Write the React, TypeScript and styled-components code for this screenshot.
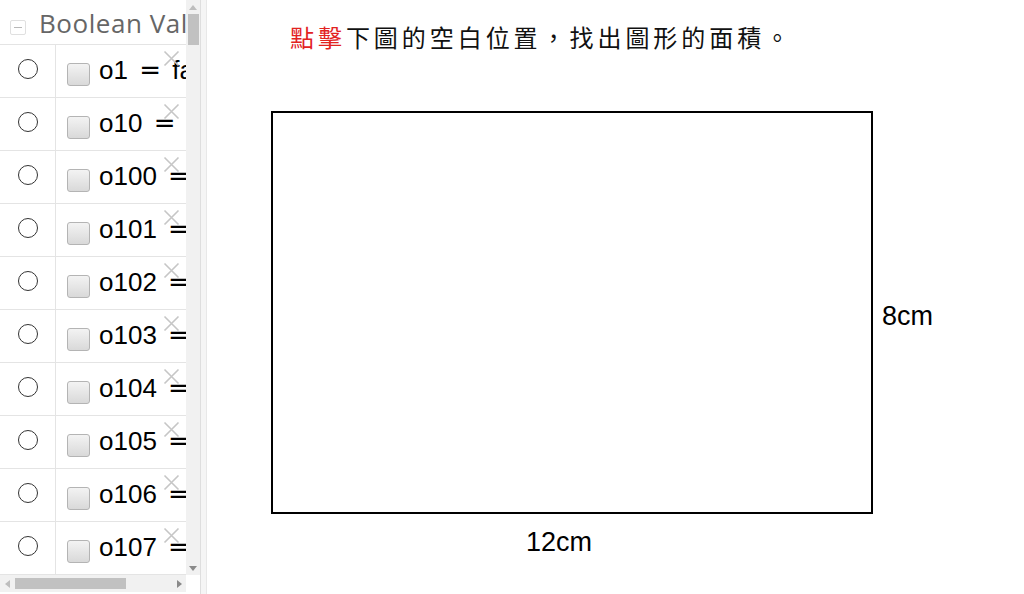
import React from 'react'
import styled, { createGlobalStyle } from 'styled-components'

const GlobalStyle = createGlobalStyle`
  html, body {
    margin: 0;
    padding: 0;
    background: #fff;
  }
  body {
    font-family: 'Liberation Sans', Arial, sans-serif;
    overflow: hidden;
  }
`

const Page = styled.div`
  display: flex;
  width: 1024px;
  height: 594px;
  overflow: hidden;
`

const AlgebraPanel = styled.div`
  display: grid;
  grid-template-columns: 186px 14px;
  grid-template-rows: 575px 17px 2px;
  width: 200px;
  flex-shrink: 0;
`

const ListArea = styled.div`
  overflow: hidden;
`

const Header = styled.div`
  display: flex;
  align-items: flex-start;
  height: 44px;
  padding-left: 10px;
  border-bottom: 1px solid #e4e4e4;
  white-space: nowrap;
`

const CollapseBox = styled.div`
  position: relative;
  flex-shrink: 0;
  width: 14px;
  height: 13px;
  margin-top: 20px;
  border: 1px solid #e0e0e0;
  border-radius: 2px;

  &::after {
    content: '';
    position: absolute;
    left: 3px;
    right: 3px;
    top: 6px;
    height: 1px;
    background: #b8b8b8;
  }
`

const HeaderTitle = styled.div`
  margin: 9px 0 0 13px;
  font-family: 'Open Sans', 'Liberation Sans', sans-serif;
  font-size: 26px;
  line-height: 28px;
  letter-spacing: 0.55px;
  color: #666;
`

const Row = styled.div`
  display: grid;
  grid-template-columns: 56px 1fr;
  height: 52px;
  border-bottom: 1px solid #e4e4e4;
`

const RadioCell = styled.div`
  display: flex;
  justify-content: center;
  align-items: flex-start;
  padding-top: 14px;
  border-right: 1px solid #e4e4e4;
`

const Radio = styled.div`
  width: 18px;
  height: 18px;
  border: 1px solid #333;
  border-radius: 50%;
  background: #fff;
`

const ValueCell = styled.div`
  position: relative;
  display: flex;
  align-items: flex-start;
  padding-left: 11px;
  overflow: hidden;
  white-space: nowrap;
`

const CheckBox = styled.div`
  flex-shrink: 0;
  width: 21px;
  height: 21px;
  margin-top: 18px;
  border: 1px solid #b4b4b4;
  border-radius: 3px;
  background: linear-gradient(#f3f3f3, #d9d9d9);
`

const Expression = styled.div`
  margin: 12px 0 0 9px;
  font-size: 26px;
  line-height: 26px;
  color: #000;
`

const Eq = styled.span`
  margin: 0 4px 0 4px;
  font-family: 'DejaVu Sans', sans-serif;
`

const DeleteButton = styled.svg`
  position: absolute;
  top: 5px;
  right: 6px;
  width: 17px;
  height: 17px;
`

const VScroll = styled.div`
  display: flex;
  flex-direction: column;
  align-items: center;
  background: #f1f1f1;
`

const ArrowBox = styled.div`
  display: flex;
  align-items: center;
  justify-content: center;
  width: 14px;
  height: 14px;
  flex-shrink: 0;
`

const Arrow = styled.div<{ $dir: 'up' | 'down' | 'left' | 'right'; $faded?: boolean }>`
  width: 0;
  height: 0;
  border: 4px solid transparent;
  ${(p) => {
    const c = p.$faded ? '#bdbdbd' : '#8a8a8a'
    if (p.$dir === 'up') return `border-bottom: 5px solid ${c}; border-top: 0;`
    if (p.$dir === 'down') return `border-top: 5px solid ${c}; border-bottom: 0;`
    if (p.$dir === 'left') return `border-right: 5px solid ${c}; border-left: 0;`
    return `border-left: 5px solid ${c}; border-right: 0;`
  }}
`

const VThumb = styled.div`
  width: 11px;
  height: 31px;
  background: #c1c1c1;
`

const Spacer = styled.div`
  flex: 1;
`

const HScroll = styled.div`
  display: flex;
  align-items: center;
  background: #f1f1f1;
`

const HThumb = styled.div`
  width: 111px;
  height: 11px;
  margin-left: 1px;
  background: #c1c1c1;
`

const Corner = styled.div`
  background: #fff;
`

const Splitter = styled.div`
  width: 5px;
  flex-shrink: 0;
  background: #f5f5f5;
  border-left: 1px solid #dedede;
  border-right: 1px solid #e8e8e8;
`

const Canvas = styled.div`
  position: relative;
  flex: 1;
  background: #fff;
`

const Prompt = styled.div`
  position: absolute;
  left: 83px;
  top: 23px;
  font-family: 'Noto Sans CJK TC', 'Noto Sans CJK SC', sans-serif;
  font-size: 24px;
  line-height: 28px;
  letter-spacing: 3.95px;
  color: #111;
  white-space: nowrap;
`

const Highlight = styled.span`
  color: #e2231f;
`

const Shape = styled.div`
  position: absolute;
  left: 64px;
  top: 111px;
  width: 598px;
  height: 399px;
  border: 2px solid #000;
`

const Measure = styled.div`
  position: absolute;
  font-size: 27px;
  line-height: 27px;
  color: #000;
  white-space: nowrap;
`

const booleans = ['o1', 'o10', 'o100', 'o101', 'o102', 'o103', 'o104', 'o105', 'o106', 'o107']

export default function App() {
  return (
    <>
      <GlobalStyle />
      <Page>
        <AlgebraPanel>
          <ListArea>
            <Header>
              <CollapseBox />
              <HeaderTitle>Boolean Values</HeaderTitle>
            </Header>
            {booleans.map((name) => (
              <Row key={name}>
                <RadioCell>
                  <Radio />
                </RadioCell>
                <ValueCell>
                  <CheckBox />
                  <Expression>
                    {name} <Eq>=</Eq> false
                  </Expression>
                  <DeleteButton viewBox="0 0 17 17">
                    <path d="M1.5 1.5 L15.5 15.5 M15.5 1.5 L1.5 15.5" stroke="#c6c6c6" strokeWidth="1.6" fill="none" />
                  </DeleteButton>
                </ValueCell>
              </Row>
            ))}
          </ListArea>
          <VScroll>
            <ArrowBox>
              <Arrow $dir="up" $faded />
            </ArrowBox>
            <VThumb />
            <Spacer />
            <ArrowBox>
              <Arrow $dir="down" />
            </ArrowBox>
          </VScroll>
          <HScroll>
            <ArrowBox>
              <Arrow $dir="left" $faded />
            </ArrowBox>
            <HThumb />
            <Spacer />
            <ArrowBox>
              <Arrow $dir="right" />
            </ArrowBox>
          </HScroll>
          <Corner />
        </AlgebraPanel>
        <Splitter />
        <Canvas>
          <Prompt>
            <Highlight>點擊</Highlight>下圖的空白位置，找出圖形的面積。
          </Prompt>
          <Shape />
          <Measure style={{ left: 675, top: 303 }}>8cm</Measure>
          <Measure style={{ left: 319, top: 529 }}>12cm</Measure>
        </Canvas>
      </Page>
    </>
  )
}
